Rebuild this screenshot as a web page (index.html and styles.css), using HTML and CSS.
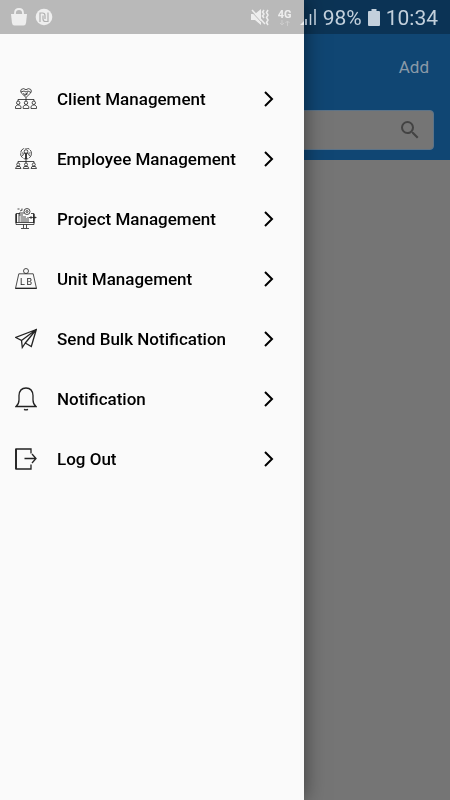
FILE: index.html
```html
<!DOCTYPE html>
<html lang="en">
<head>
    <meta charset="UTF-8">
    <meta name="viewport" content="width=device-width, initial-scale=1.0">
    <title>Management</title>
    <link rel="stylesheet" href="styles.css">
</head>
<body>
    <div class="status-bar">
        <div class="status-left">
            <svg class="status-bag" viewBox="0 0 18 18">
                <path d="M1 6h16l-1 9q-.4 2.500-2.500 2.500h-9Q2.400 17.500 2 15z" fill="currentColor"/>
                <path d="M5 8V5q0-4 4-4t4 4v3" fill="none" stroke="currentColor" stroke-width="1.800"/>
            </svg>
            <svg class="status-app" viewBox="0 0 18 18">
                <circle cx="9" cy="9" r="8.300" fill="currentColor"/>
                <path d="M5 14V5h2.500Q10 5 10 7.500V11M8 7.500v3.500Q8 13.500 10.500 13.500H13V4.500" fill="none" stroke="#b0b0b0" stroke-width="1.200"/>
            </svg>
        </div>
        <div class="status-right">
            <svg class="status-mute" viewBox="0 0 20 18">
                <path d="M1 6h4l6-5v16l-6-5H1z" fill="currentColor"/>
                <path d="M1 3l13 14" stroke="#b9b9b9" stroke-width="1"/>
                <path d="M2 2l13 14" stroke="currentColor" stroke-width="1.500"/>
                <path d="M14 2l-1.500 2L14 6l-1.500 2L14 10M18 2l-1.500 2.500L18 7l-1.500 2.500L18 12l-1.500 2.500L18 17" fill="none" stroke="currentColor" stroke-width="1.500"/>
            </svg>
            <div class="status-network">
                <span>4G</span>
                <svg class="status-arrows" viewBox="0 0 12 6">
                    <path d="M3 0v5M1 3l2 2 2-2M8.500 6V1M6.500 3l2-2 2 2" fill="none" stroke="currentColor"/>
                </svg>
            </div>
            <svg class="status-signal" viewBox="0 0 17 18">
                <path d="M0 17l4-4v4z" fill="#eee"/>
                <path d="M6 17v-6M10.500 17V6M15 17V1" stroke="currentColor" stroke-width="1.500"/>
            </svg>
            <span class="status-text">98%</span>
            <svg class="status-battery" viewBox="0 0 12 17">
                <path d="M3.500 0h5v2H11q1 0 1 1v13q0 1-1 1H1q-1 0-1-1V3q0-1 1-1h2.500z" fill="currentColor"/>
            </svg>
            <span class="status-text">10:34</span>
        </div>
    </div>

    <main class="page">
        <header class="header">
            <div class="toolbar">
                <button class="add-button" type="button">Add</button>
            </div>
            <div class="search">
                <input class="search-input" type="search" aria-label="Search">
                <svg class="search-icon" viewBox="0 0 24 24">
                    <path d="M15.500 14h-.79l-.28-.27A6.471 6.471 0 0 0 16 9.500 6.500 6.500 0 1 0 9.500 16c1.610 0 3.090-.59 4.230-1.570l.27.28v.79l5 4.990L20.490 19l-4.990-5zm-6 0C7.010 14 5 11.990 5 9.500S7.010 5 9.500 5 14 7.010 14 9.500 11.990 14 9.500 14z" fill="currentColor"/>
                </svg>
            </div>
        </header>
    </main>

    <nav class="drawer">
        <a class="menu-item" href="#clients">
            <svg class="menu-icon" viewBox="0 0 22 22">
                <path d="M11 9.500L6.200 4.800Q5 3 6.300 1.400 8.500-.3 11 1.700q2.500-2 4.700-.3Q17 3 15.800 4.800z"/>
                <path d="M6 4l3-1 2 1 2-1 3 1.500M8 5.500l2 1 3-2M9.500 7.500l3-1.500"/>
                <path d="M11 9.500V13M3 13v-1.500h16V13"/>
                <circle cx="3.200" cy="14.800" r="1.700"/><circle cx="11" cy="14.800" r="1.700"/><circle cx="18.800" cy="14.800" r="1.700"/>
                <path d="M.5 20.500v-2l1.700-1.500h2L6 18.500v2zM8.200 20.500v-2l1.800-1.500h2l1.800 1.500v2zM16 20.500v-2l1.800-1.500h2l1.700 1.500v2z"/>
            </svg>
            <span class="menu-label">Client Management</span>
            <svg class="chevron" viewBox="0 0 10 16"><path d="M1 1l7 7-7 7"/></svg>
        </a>
        <a class="menu-item" href="#employees">
            <svg class="menu-icon" viewBox="0 0 22 22">
                <circle cx="11" cy="5.500" r="5.500" stroke-dasharray="5 1"/>
                <circle cx="11" cy="3.500" r="1.800"/>
                <path d="M7.500 8q0-2 2-2.500h3q2 .5 2 2.500M6.500 5h2M13.500 5h2"/>
                <path d="M11 6v5" stroke-width="1.800"/>
                <path d="M11 11v4M3 15v-1.500h16V15"/>
                <circle cx="3.200" cy="16.500" r="1.500"/><circle cx="11" cy="16.500" r="1.500"/><circle cx="18.800" cy="16.500" r="1.500"/>
                <path d="M.5 20.500l1-2h3.500l1 2zM8.200 20.500l1-2h3.600l1 2zM16 20.500l1-2h3.500l1 2z"/>
            </svg>
            <span class="menu-label">Employee Management</span>
            <svg class="chevron" viewBox="0 0 10 16"><path d="M1 1l7 7-7 7"/></svg>
        </a>
        <a class="menu-item" href="#projects">
            <svg class="menu-icon" viewBox="0 0 22 22">
                <path d="M5 5.500H1v11h18v-11h-3M1 14.500h18M8.500 16.500v3.500M11.500 16.500v3.500M6 20.500h8"/>
                <path d="M1.200 6v9M18.800 6v9" stroke-width="1.400"/>
                <path d="M4 14V5h5M4 7h4M5.500 9H11M5.500 11H12M5.500 13H12M13 9v5"/>
                <circle cx="12" cy="3.500" r="3"/><circle cx="12" cy="3.500" r="1"/>
                <path d="M2.500 1h2M5 3l2-1M7 .5v2M14 9.500h7.500M16 8v3M20 8.500v2"/>
            </svg>
            <span class="menu-label">Project Management</span>
            <svg class="chevron" viewBox="0 0 10 16"><path d="M1 1l7 7-7 7"/></svg>
        </a>
        <a class="menu-item" href="#units">
            <svg class="menu-icon" viewBox="0 0 22 22">
                <circle cx="11" cy="3" r="2.500"/>
                <path d="M3.800 5.800h14.400L21.500 20.500H.5z"/>
                <path d="M.5 20.300h21" stroke-width="1.300"/>
                <text class="weight-text" x="5" y="16.500">L</text>
                <text class="weight-text" x="11.500" y="16.500">B</text>
            </svg>
            <span class="menu-label">Unit Management</span>
            <svg class="chevron" viewBox="0 0 10 16"><path d="M1 1l7 7-7 7"/></svg>
        </a>
        <a class="menu-item" href="#bulk">
            <svg class="menu-icon menu-icon-bold" viewBox="0 0 22 22">
                <path d="M21.300 1.500L.7 9.500l5.800 3 .8 7 3-4.500 6 3.500zM21.300 1.500L6.500 12.500M21.300 1.500L10.300 15M10.300 15l-3 4.500"/>
            </svg>
            <span class="menu-label">Send Bulk Notification</span>
            <svg class="chevron" viewBox="0 0 10 16"><path d="M1 1l7 7-7 7"/></svg>
        </a>
        <a class="menu-item" href="#notifications">
            <svg class="menu-icon menu-icon-bold" viewBox="0 0 22 24">
                <path d="M1 19.500Q4 17 4 13V8.500Q4.500 1 11 1t7 7.500V13q0 4 3 6.500z"/>
                <path d="M9 22.300q2 1 4 0"/>
            </svg>
            <span class="menu-label">Notification</span>
            <svg class="chevron" viewBox="0 0 10 16"><path d="M1 1l7 7-7 7"/></svg>
        </a>
        <a class="menu-item" href="#logout">
            <svg class="menu-icon menu-icon-bold" viewBox="0 0 22 22">
                <path d="M16 5.500V1H1v20h15v-4.500M9.500 10.500H21M17 6l4 4.500-4 4.500"/>
                <path d="M1 1v20" stroke-width="1.800"/>
            </svg>
            <span class="menu-label">Log Out</span>
            <svg class="chevron" viewBox="0 0 10 16"><path d="M1 1l7 7-7 7"/></svg>
        </a>
    </nav>
</body>
</html>
```
FILE: styles.css
```css
* {
    box-sizing: border-box;
}

body {
    margin: 0;
    min-height: 100vh;
    font-family: Roboto, "Liberation Sans", sans-serif;
    background: #757575;
    color: #000;
}

svg {
    display: block;
    flex-shrink: 0;
}

/* Status bar */
.status-bar {
    position: fixed;
    top: 0;
    left: 0;
    right: 0;
    z-index: 20;
    height: 34px;
    padding: 0 12px 0 10px;
    display: flex;
    align-items: center;
    justify-content: space-between;
    background: rgba(0, 0, 0, 0.26);
    color: #eee;
}

.status-left,
.status-right {
    display: flex;
    align-items: center;
}

.status-left {
    gap: 7px;
}

.status-right {
    gap: 6px;
    color: #c3d0dc;
}

.status-bag,
.status-app {
    width: 18px;
    height: 18px;
}

.status-mute {
    width: 20px;
    height: 18px;
    color: #eee;
}

.status-network {
    display: flex;
    flex-direction: column;
    align-items: center;
    width: 18px;
    font-size: 11px;
    line-height: 11px;
    font-weight: 700;
    color: #eee;
}

.status-arrows {
    width: 12px;
    height: 6px;
    color: #ccc;
}

.status-signal {
    width: 17px;
    height: 18px;
}

.status-text {
    padding-top: 1px;
    font-size: 21px;
    line-height: 24px;
}

.status-battery {
    width: 12px;
    height: 17px;
}

/* Page behind the drawer */
.header {
    padding: 34px 16px 10px;
    background: #104673;
}

.toolbar {
    height: 76px;
    display: flex;
    align-items: center;
    justify-content: flex-end;
    padding-bottom: 10px;
}

.add-button {
    padding: 5px;
    border: none;
    background: none;
    font-family: inherit;
    font-size: 17px;
    line-height: 20px;
    color: #8a9aa8;
}

.search {
    height: 40px;
    display: flex;
    align-items: center;
    padding: 0 11px;
    background: #757575;
    border: 1px solid #5c7388;
    border-radius: 4px;
}

.search-input {
    flex: 1;
    min-width: 0;
    border: none;
    outline: none;
    background: none;
    font-family: inherit;
    font-size: 17px;
}

.search-icon {
    width: 24px;
    height: 24px;
    color: #434343;
}

/* Drawer */
.drawer {
    position: fixed;
    top: 0;
    bottom: 0;
    left: 0;
    z-index: 10;
    width: 304px;
    padding-top: 69px;
    overflow-y: auto;
    background: #fafafa;
    box-shadow: 0 0 20px rgba(0, 0, 0, 0.5);
}

.menu-item {
    height: 60px;
    padding: 0 30px 0 15px;
    display: flex;
    align-items: center;
    color: #000;
    text-decoration: none;
}

.menu-icon {
    width: 22px;
    height: 22px;
    fill: none;
    stroke: #222;
    stroke-width: 0.8;
}

.menu-icon-bold {
    height: 24px;
    stroke-width: 1.3;
}

.weight-text {
    font-size: 9px;
    fill: #222;
    stroke: none;
}

.menu-label {
    flex: 1;
    margin-left: 20px;
    font-size: 17px;
    line-height: 24px;
    font-weight: 500;
}

.chevron {
    width: 10px;
    height: 16px;
    fill: none;
    stroke: #000;
    stroke-width: 2;
}
```
